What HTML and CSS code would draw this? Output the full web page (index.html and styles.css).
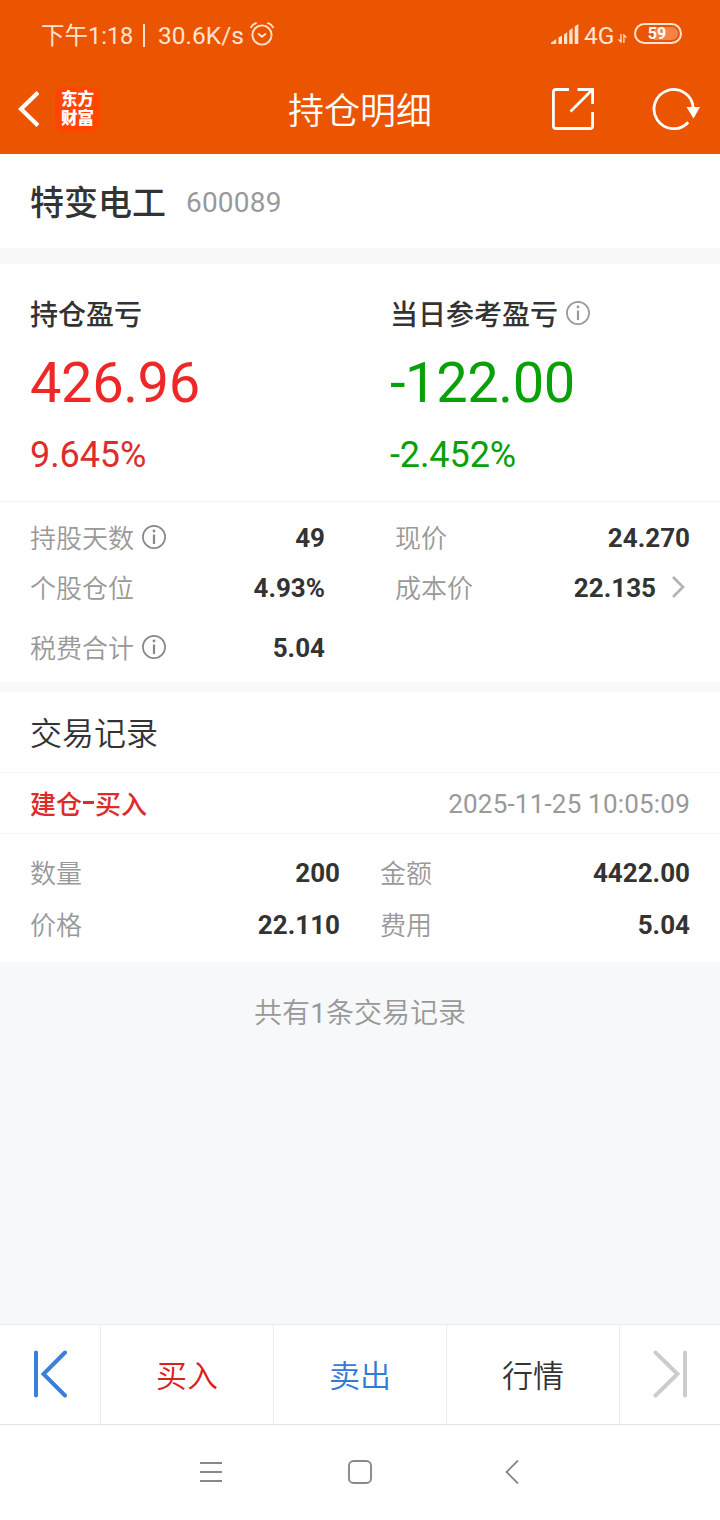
FILE: index.html
```
<!DOCTYPE html>
<html lang="zh-CN">
<head>
  <meta charset="UTF-8">
  <meta name="viewport" content="width=device-width, initial-scale=1.0">
  <title>持仓明细</title>
  <link rel="stylesheet" href="styles.css">
</head>
<body>
  <header class="header">
    <div class="status-bar">
      <span class="status-time">下午1:18</span>
      <span class="status-line"></span>
      <span class="status-speed">30.6K/s</span>
      <svg class="alarm" width="24" height="24" viewBox="0 0 24 24" fill="none" stroke="#ffe3cf" stroke-width="1.9" stroke-linecap="round">
        <circle cx="12" cy="13" r="9.6"/>
        <path d="M1 5.2 Q2.5 2.3 6 1.2 M18 1.2 Q21.5 2.3 23 5.2 M8.6 12 L12 14.8 L15.4 12"/>
      </svg>
      <svg class="signal" width="28" height="20" viewBox="0 0 28 20" fill="#ffe3cf">
        <path d="M0 20 V18.8 L5.2 15 V20 Z M7.5 20 V13.6 L11 11.4 V20 Z M13 20 V10.4 L16.2 8.2 V20 Z M18.2 20 V6.6 L21.6 4 V20 Z M23.7 20 V2.4 L27.3 0 V20 Z"/>
      </svg>
      <span class="status-net">4G</span>
      <svg class="updown" width="9" height="9" viewBox="0 0 9 9" fill="none" stroke="#ffe3cf" stroke-width="1.3">
        <path d="M3 0 V8 L0.5 5.4 M5.9 9 V1 L8.4 3.6"/>
      </svg>
      <span class="battery"><span class="battery-level">59</span></span>
    </div>
    <div class="nav-bar">
      <div class="nav-left">
        <svg width="21" height="36" viewBox="0 0 21 36" fill="none" stroke="#fff" stroke-width="4.2">
          <path d="M20 1.5 L3 18 L20 34.5"/>
        </svg>
        <div class="logo">东方<br>财富</div>
      </div>
      <h1 class="title">持仓明细</h1>
      <div class="nav-right">
        <svg width="42" height="42" viewBox="0 0 42 42" fill="none" stroke="#fff" stroke-width="2.8">
          <path d="M17 1.5 H4 Q1.4 1.5 1.4 4 V38 Q1.4 40.5 4 40.5 H38 Q40.6 40.5 40.6 38 V24 M25.5 1.5 H40.6 V16 M40 2 L18.5 23.5"/>
        </svg>
        <svg width="48" height="42" viewBox="0 0 48 42" fill="none" stroke="#fff" stroke-width="2.8">
          <path d="M36.2 34.2 A19.6 19.6 0 1 1 41.2 20"/>
          <path d="M34.5 19 H48 L41.5 30.5 Z" fill="#fff" stroke="none"/>
        </svg>
      </div>
    </div>
  </header>

  <section class="stock">
    <span class="stock-name">特变电工</span>
    <span class="stock-code">600089</span>
  </section>

  <section class="profit">
    <div class="profit-item">
      <div class="profit-label">持仓盈亏</div>
      <div class="profit-value red">426.96</div>
      <div class="profit-rate red">9.645%</div>
    </div>
    <div class="profit-item">
      <div class="profit-label">当日参考盈亏
        <svg class="info" width="24" height="24" viewBox="0 0 24 24" fill="none" stroke="#999" stroke-width="1.7"><circle cx="12" cy="12" r="11.1"/><path d="M12 9.5 V19" stroke-width="2.2"/><circle cx="12" cy="6" r="1.4" fill="#999" stroke="none"/></svg>
      </div>
      <div class="profit-value green">-122.00</div>
      <div class="profit-rate green">-2.452%</div>
    </div>
  </section>

  <section class="detail">
    <div class="detail-col">
      <div class="row">
        <span class="label">持股天数</span>
        <svg class="info" width="24" height="24" viewBox="0 0 24 24" fill="none" stroke="#888" stroke-width="1.7"><circle cx="12" cy="12" r="11.1"/><path d="M12 9.5 V19" stroke-width="2.2"/><circle cx="12" cy="6" r="1.4" fill="#888" stroke="none"/></svg>
        <span class="value">49</span>
      </div>
      <div class="row">
        <span class="label">个股仓位</span>
        <span class="value">4.93%</span>
      </div>
      <div class="row tax">
        <span class="label">税费合计</span>
        <svg class="info" width="24" height="24" viewBox="0 0 24 24" fill="none" stroke="#888" stroke-width="1.7"><circle cx="12" cy="12" r="11.1"/><path d="M12 9.5 V19" stroke-width="2.2"/><circle cx="12" cy="6" r="1.4" fill="#888" stroke="none"/></svg>
        <span class="value">5.04</span>
      </div>
    </div>
    <div class="detail-col">
      <div class="row">
        <span class="label">现价</span>
        <span class="value">24.270</span>
      </div>
      <div class="row">
        <span class="label">成本价</span>
        <span class="value">22.135</span>
        <svg class="arrow" width="13" height="22" viewBox="0 0 13 22" fill="none" stroke="#b2b2b2" stroke-width="2.6">
          <path d="M1 1 L11 11 L1 21"/>
        </svg>
      </div>
    </div>
  </section>

  <section class="records">
    <h2 class="records-title">交易记录</h2>
    <div class="record-head">
      <span class="record-type">建仓<i class="dash"></i>买入</span>
      <span class="record-time">2025-11-25 10:05:09</span>
    </div>
    <div class="record-body">
      <div class="row"><span class="label">数量</span><span class="value">200</span></div>
      <div class="row"><span class="label">金额</span><span class="value">4422.00</span></div>
      <div class="row"><span class="label">价格</span><span class="value">22.110</span></div>
      <div class="row"><span class="label">费用</span><span class="value">5.04</span></div>
    </div>
  </section>

  <p class="total">共有<span class="count">1</span>条交易记录</p>

  <nav class="tabs">
    <div class="tab">
      <svg width="34" height="48" viewBox="0 0 34 48" fill="none" stroke="#3a80d8" stroke-width="4" stroke-linecap="round">
        <path d="M3 2.5 V45.5 M32 2.5 L10.5 24 L32 45.5"/>
      </svg>
    </div>
    <div class="tab buy">买入</div>
    <div class="tab sell">卖出</div>
    <div class="tab">行情</div>
    <div class="tab">
      <svg width="34" height="48" viewBox="0 0 34 48" fill="none" stroke="#ccc" stroke-width="4" stroke-linecap="round">
        <path d="M32 2.5 V45.5 M2.5 2.5 L24.5 24 L2.5 45.5"/>
      </svg>
    </div>
  </nav>

  <footer class="system-bar">
    <svg width="22" height="24" viewBox="0 0 22 24" fill="none" stroke="#888" stroke-width="1.8">
      <path d="M0 3 H22 M0 12 H22 M0 21 H22"/>
    </svg>
    <svg width="24" height="24" viewBox="0 0 24 24" fill="none" stroke="#888" stroke-width="1.9">
      <rect x="1" y="1" width="22" height="22" rx="4.5"/>
    </svg>
    <svg width="14" height="24" viewBox="0 0 14 24" fill="none" stroke="#888" stroke-width="1.9">
      <path d="M13 0.5 L1.5 12 L13 23.5"/>
    </svg>
  </footer>
</body>
</html>
```
FILE: styles.css
```
* {
  box-sizing: border-box;
}
body {
  margin: 0;
  height: 1520px;
  display: flex;
  flex-direction: column;
  background-color: #f7f8fa;
  color: #333333;
  font-family: Roboto, "Noto Sans CJK SC", sans-serif;
}
svg {
  display: block;
  flex: none;
}
h1, h2, p {
  margin: 0;
  font-weight: normal;
}
.header {
  height: 154px;
  background-color: #eb5502;
  color: #ffffff;
}
.status-bar {
  display: flex;
  align-items: center;
  height: 68px;
  padding: 2px 38px 0 41px;
  font-size: 24.5px;
  line-height: 30px;
  color: #ffe3cf;
}
.status-time {
  width: 92px;
  padding-top: 2px;
  font-size: 23.5px;
  white-space: nowrap;
}
.status-line {
  width: 2px;
  height: 23px;
  margin: 0 13px 0 10px;
  background-color: #ffe3cf;
}
.status-speed {
  width: 86px;
  padding-top: 1px;
}
.alarm {
  margin: 0 auto 2px 6px;
}
.signal {
  margin-bottom: 2px;
}
.status-net {
  width: 32px;
  margin-left: 5px;
  padding-top: 1px;
}
.updown {
  margin: 7px 7px 0 2px;
}
.battery {
  width: 48px;
  height: 21px;
  margin-bottom: 3px;
  padding: 2px;
  border: 2px solid #ffe3cf;
  border-radius: 11px;
}
.battery-level {
  display: block;
  height: 13px;
  padding-right: 2px;
  border-radius: 7px;
  background: linear-gradient(90deg, #eb5502 40%, #f28449 40%);
  font-size: 16px;
  font-weight: bold;
  line-height: 13px;
  text-align: center;
  color: #ffffff;
}
.nav-bar {
  display: grid;
  grid-template-columns: 200px 1fr 200px;
  align-items: center;
  height: 82px;
}
.nav-left {
  display: flex;
  align-items: center;
  gap: 16px;
  padding-left: 18px;
}
.logo {
  width: 45px;
  height: 45px;
  padding-top: 3px;
  border-radius: 8px;
  background-color: #ff4600;
  font-size: 16.5px;
  font-weight: 900;
  line-height: 19px;
  text-align: center;
}
.title {
  padding-top: 5px;
  font-size: 36px;
  font-weight: 350;
  line-height: 48px;
  text-align: center;
}
.nav-right {
  display: flex;
  gap: 58px;
  padding-left: 32px;
}
.stock {
  display: flex;
  align-items: center;
  height: 94px;
  padding: 2px 30px 0;
  background-color: #ffffff;
}
.stock-name {
  margin-top: -4px;
  font-size: 34px;
  font-weight: 500;
}
.stock-code {
  margin-left: 20px;
  font-size: 28px;
  letter-spacing: 0.2px;
  color: #999999;
}
.profit {
  display: grid;
  grid-template-columns: 360px 330px;
  height: 238px;
  margin-top: 16px;
  padding: 28px 0 0 30px;
  border-bottom: 1px solid #f5f5f5;
  background-color: #ffffff;
}
.profit-label {
  display: flex;
  align-items: center;
  gap: 8px;
  height: 42px;
  font-size: 28px;
  font-weight: 500;
}
.profit-value {
  height: 66px;
  margin-top: 16px;
  font-size: 56px;
  line-height: 66px;
  letter-spacing: -0.4px;
}
.profit-rate {
  margin-top: 18px;
  font-size: 36px;
  line-height: 42px;
  letter-spacing: -0.1px;
}
.red {
  color: #ee2828;
}
.profit-rate.red {
  color: #dc2d2d;
}
.green {
  color: #09a009;
}
.detail {
  display: flex;
  justify-content: space-between;
  height: 180px;
  padding: 11px 30px 0;
  background-color: #ffffff;
}
.detail-col {
  width: 295px;
}
.row {
  display: flex;
  align-items: center;
  height: 50px;
  font-size: 26px;
}
.row.tax {
  height: 70px;
}
.row .info {
  margin: -2px 0 0 8px;
}
.row .arrow {
  margin: -2px 5px 0 16px;
}
.label {
  margin-top: -3px;
  font-weight: 350;
  color: #999999;
}
.value {
  margin-left: auto;
  font-weight: bold;
}
.records {
  margin-top: 10px;
  background-color: #ffffff;
}
.records-title {
  height: 81px;
  padding: 0 30px;
  border-bottom: 1px solid #f5f5f5;
  font-size: 32px;
  font-weight: 350;
  line-height: 85px;
}
.record-head {
  display: flex;
  align-items: center;
  justify-content: space-between;
  height: 61px;
  padding: 1px 30px 0;
  border-bottom: 1px solid #f5f5f5;
  font-size: 26px;
}
.record-type {
  display: flex;
  align-items: center;
  margin-top: -3px;
  font-weight: 500;
  color: #dd2b2b;
}
.dash {
  width: 11px;
  height: 3px;
  margin: 1px 1px 0;
  background-color: #dd2b2b;
}
.record-time {
  letter-spacing: 0.2px;
  color: #999999;
}
.record-body {
  display: grid;
  grid-template-columns: 310px 310px;
  column-gap: 40px;
  height: 128px;
  padding: 13px 30px;
}
.record-body .row {
  height: 52px;
}
.total {
  height: 100px;
  font-size: 28px;
  font-weight: 350;
  line-height: 103px;
  text-align: center;
  color: #999999;
}
.count {
  font-weight: 400;
}
.tabs {
  display: grid;
  grid-template-columns: 100px 1fr 1fr 1fr 101px;
  height: 101px;
  margin-top: auto;
  border-top: 1px solid #ebebeb;
  border-bottom: 1px solid #e2e2e2;
  background-color: #ffffff;
}
.tab {
  display: flex;
  align-items: center;
  justify-content: center;
  padding-bottom: 2px;
  border-left: 1px solid #ebebeb;
  font-size: 31px;
  font-weight: 350;
}
.tab:first-child {
  border-left: none;
}
.buy {
  color: #dd2020;
}
.sell {
  color: #2f7bd5;
}
.system-bar {
  display: flex;
  justify-content: center;
  height: 95px;
  padding: 35px 1px 0 0;
  gap: 126px;
  background-color: #ffffff;
}
.system-bar svg:last-child {
  margin-left: 7px;
}
```
